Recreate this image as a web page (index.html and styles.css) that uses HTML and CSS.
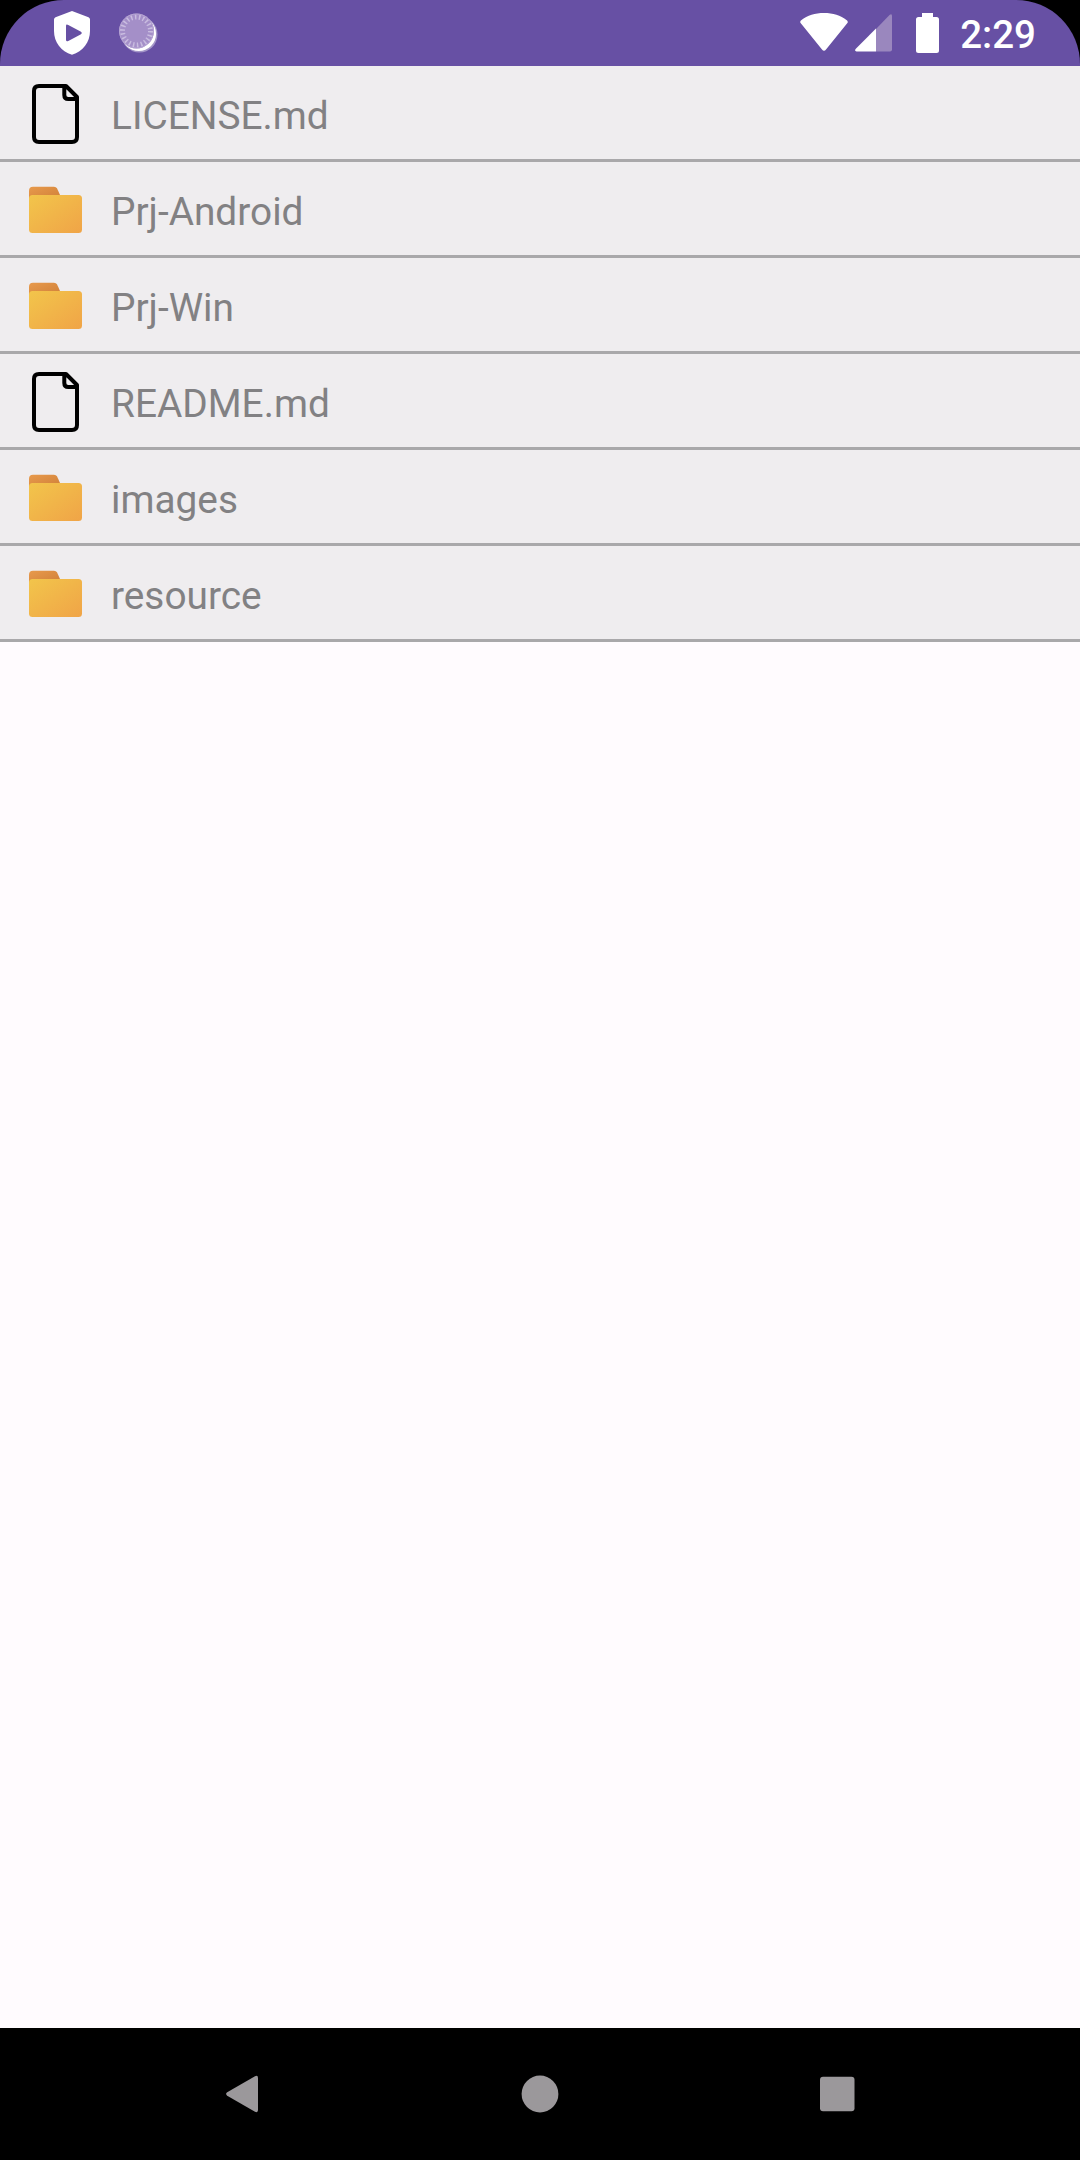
FILE: index.html
```html
<!DOCTYPE html>
<html lang="en">
<head>
<meta charset="utf-8">
<title>Files</title>
<link rel="stylesheet" href="styles.css">
</head>
<body>
<svg class="defs" width="0" height="0">
  <defs>
    <linearGradient id="front" x1="0" y1="0" x2="1" y2="1">
      <stop offset="0" stop-color="#f2c54b"/>
      <stop offset="1" stop-color="#f0a447"/>
    </linearGradient>
    <linearGradient id="tab" x1="0" y1="0" x2="1" y2="1">
      <stop offset="0" stop-color="#e89a4c"/>
      <stop offset="1" stop-color="#cf7f38"/>
    </linearGradient>
    <symbol id="file" viewBox="0 0 60 66">
      <path d="M39.300 6H14Q9 6 9 11V57Q9 62 14 62H47Q52 62 52 57V17L41 6H39.300V15Q39.300 19 43.300 19H52V17" fill="none" stroke="#000" stroke-width="4" stroke-linejoin="round"/>
    </symbol>
    <symbol id="folder" viewBox="0 0 60 66">
      <path d="M4 24V14.700Q4 10.700 8 10.700H29Q31 10.700 32 12.200L35 19V24Z" fill="url(#tab)"/>
      <rect x="4" y="19" width="53" height="38" rx="3.500" fill="url(#front)"/>
    </symbol>
  </defs>
</svg>
<div class="screen">
  <header class="status">
    <div class="status-bar">
      <div class="notifications">
        <svg width="36" height="44" viewBox="0 0 36 44"><path fill="#fff" fill-rule="evenodd" d="M18 0 34.500 6.300Q36 7 36 8.500V20C36 31 29 40.500 18 43.800C7 40.500 0 31 0 20V8.500Q0 7 1.500 6.300ZM12 15V28.500Q12 31.200 14.300 30L27 23.200Q28.800 22 27 20.800L14.300 14Q12 12.700 12 15Z"/></svg>
        <svg width="40" height="42" viewBox="0 0 40 42">
          <circle cx="20.500" cy="21.500" r="18" fill="#fff" opacity=".4"/>
          <circle cx="19.800" cy="20.800" r="17.300" fill="#fff"/>
          <circle cx="17.500" cy="18" r="17.500" fill="#a48fc8"/>
          <circle cx="17.500" cy="18" r="14" fill="none" stroke="#c9bce0" stroke-width="5" stroke-dasharray="1.500 2.498"/>
          <circle cx="17.500" cy="18" r="17" fill="none" stroke="#b5a4d3" stroke-width="1"/>
        </svg>
      </div>
      <div class="system">
        <svg class="wifi" width="48" height="38" viewBox="0 0 48 38"><path fill="#fff" d="M24 0C33 0 40.500 2.500 46.800 7.200Q48.500 8.600 47.200 10.300L26 36.500Q24 39 22 36.500L.8 10.300Q-.5 8.600 1.200 7.200C7.500 2.500 15 0 24 0Z"/></svg>
        <svg class="signal" width="37" height="38" viewBox="0 0 37 38"><path fill="#9a87be" d="M21 15 34.500 1Q37 -.8 37 2V35.500Q37 37.500 35 37.500H21Z"/><path fill="#fff" d="M21 14.500V37.500H1.500Q-.8 37 .6 35Z"/></svg>
        <svg class="battery" width="23" height="40" viewBox="0 0 23 40"><path fill="#fff" d="M6 0H17V4H20.500Q23 4 23 6.500V37.500Q23 40 20.500 40H2.500Q0 40 0 37.500V6.500Q0 4 2.500 4H6Z"/></svg>
        <span class="clock">2:29</span>
      </div>
    </div>
  </header>
  <main class="content">
    <ul class="files">
      <li class="row"><svg class="icon"><use href="#file"/></svg><span>LICENSE.md</span></li>
      <li class="row"><svg class="icon"><use href="#folder"/></svg><span>Prj-Android</span></li>
      <li class="row"><svg class="icon"><use href="#folder"/></svg><span>Prj-Win</span></li>
      <li class="row"><svg class="icon"><use href="#file"/></svg><span>README.md</span></li>
      <li class="row"><svg class="icon"><use href="#folder"/></svg><span>images</span></li>
      <li class="row"><svg class="icon"><use href="#folder"/></svg><span>resource</span></li>
    </ul>
  </main>
  <nav class="nav">
    <svg width="40" height="40" viewBox="0 0 40 40"><path fill="#9b989b" d="M5.200 18.300 33 2.200Q36 1 36 4V36Q36 39 33 37.800L5.200 21.700Q3 20 5.200 18.300Z"/></svg>
    <svg width="40" height="40" viewBox="0 0 40 40"><circle cx="20" cy="20" r="18.400" fill="#9b989b"/></svg>
    <svg width="40" height="40" viewBox="0 0 40 40"><rect x="3" y="2.700" width="34.500" height="34.500" rx="3" fill="#9b989b"/></svg>
  </nav>
</div>
</body>
</html>
```
FILE: styles.css
```css
* { box-sizing: border-box; }
body { margin: 0; background: #000; font-family: Roboto, sans-serif; }
.defs { display: block; height: 0; }
.screen { display: flex; flex-direction: column; width: 1080px; height: 2160px; background: #000; }
.status { height: 66px; background: #000; }
.status-bar { display: flex; justify-content: space-between; height: 66px; padding: 0 44px 0 54px; background: #6750a4; border-radius: 64px 64px 0 0; }
.status svg { display: block; }
.notifications { display: flex; gap: 29px; padding-top: 11px; }
.notifications svg + svg { margin-top: 2px; }
.system { display: flex; align-items: flex-start; padding-top: 13px; }
.signal { margin: 1px 0 0 7px; }
.battery { margin-left: 24px; }
.clock { margin: -1px 0 0 21px; color: #fff; font-size: 38.5px; font-weight: 500; line-height: 46px; }
.content { flex: 1; background: #fffbfe; }
.files { margin: 0; padding: 0; list-style: none; }
.row { display: flex; align-items: flex-start; height: 96px; padding: 14px 0 0 25px; gap: 26px; background: #efedef; border-bottom: 3px solid #a9a8aa; color: #828183; font-size: 38.8px; line-height: 46px; }
.row span { padding-top: 13px; }
.icon { width: 60px; height: 66px; }
.nav { display: flex; align-items: center; justify-content: space-between; height: 132px; padding: 0 223px 0 222px; background: #000; }
```
